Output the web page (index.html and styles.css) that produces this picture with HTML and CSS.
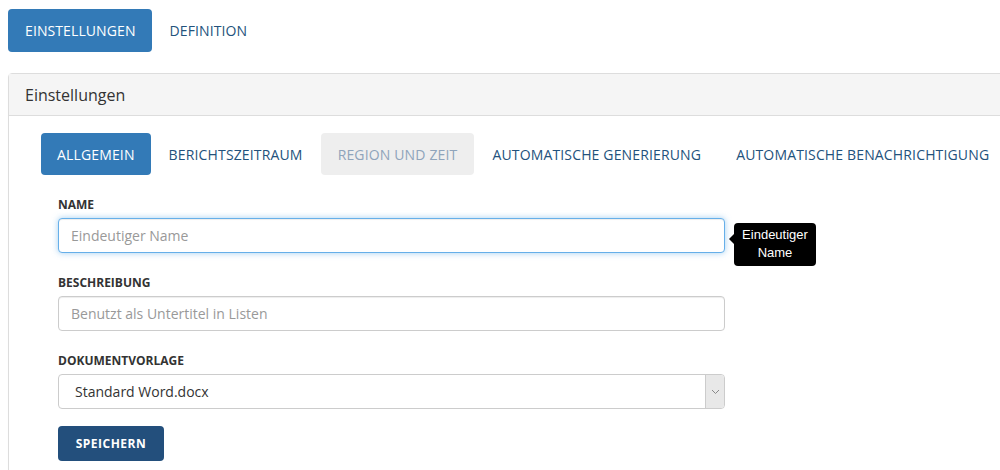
FILE: index.html
```html
<!DOCTYPE html>
<html lang="de">
<head>
<meta charset="utf-8">
<link rel="stylesheet" href="styles.css">
</head>
<body>
<div class="page">
  <nav class="top-tabs">
    <a class="tab active">EINSTELLUNGEN</a>
    <a class="tab">DEFINITION</a>
  </nav>
  <section class="panel">
    <div class="panel-heading">Einstellungen</div>
    <div class="panel-body">
      <nav class="pills">
        <a class="pill active">ALLGEMEIN</a>
        <a class="pill">BERICHTSZEITRAUM</a>
        <a class="pill disabled">REGION UND ZEIT</a>
        <a class="pill">AUTOMATISCHE GENERIERUNG</a>
        <a class="pill">AUTOMATISCHE BENACHRICHTIGUNG</a>
      </nav>
      <form class="form">
        <div class="group">
          <label class="label">NAME</label>
          <div class="field-wrap">
            <input class="input focus" placeholder="Eindeutiger Name">
            <div class="tooltip"><span class="tip-arrow"></span>Eindeutiger<br>Name</div>
          </div>
        </div>
        <div class="group">
          <label class="label">BESCHREIBUNG</label>
          <input class="input" placeholder="Benutzt als Untertitel in Listen">
        </div>
        <div class="group">
          <label class="label">DOKUMENTVORLAGE</label>
          <div class="select">
            <span class="select-value">Standard Word.docx</span>
            <span class="select-arrow">
              <svg width="9" height="6" viewBox="0 0 9 6"><path d="M1 1l3.5 3.5L8 1" fill="none" stroke="#888" stroke-width="1"/></svg>
            </span>
          </div>
        </div>
        <button type="button" class="btn-save">SPEICHERN</button>
      </form>
    </div>
  </section>
</div>
</body>
</html>
```

FILE: styles.css
```css
html, body {
  margin: 0;
  padding: 0;
  background: #fff;
  overflow: hidden;
}
body {
  font-family: "Open Sans", "Segoe UI", sans-serif;
  color: #333;
  font-size: 14px;
}
.page {
  padding: 9px 0 0 8px;
  width: 1040px;
}
.top-tabs {
  display: flex;
  gap: 1px;
}
.tab {
  display: flex;
  align-items: center;
  height: 43px;
  padding: 0 17px;
  font-size: 14px;
  letter-spacing: 0.1px;
  color: #23527c;
  border-radius: 4px;
  box-sizing: border-box;
}
.tab.active {
  background: #337ab7;
  color: #fff;
  padding: 0 16px 0 17px;
}
.panel {
  margin-top: 21px;
  border: 1px solid #ddd;
  border-radius: 4px 0 0 4px;
  box-shadow: 0 1px 1px rgba(0,0,0,.05);
}
.panel-heading {
  background: #f5f5f5;
  border-bottom: 1px solid #ddd;
  height: 41px;
  display: flex;
  align-items: center;
  padding-left: 16px;
  font-size: 16px;
  color: #333;
}
.panel-body {
  padding: 17px 0 12px 32px;
}
.pills {
  display: flex;
  gap: 1px;
}
.pill {
  display: flex;
  align-items: center;
  height: 42px;
  padding: 0 17px;
  font-size: 14px;
  letter-spacing: 0.15px;
  color: #23527c;
  border-radius: 4px;
  white-space: nowrap;
}
.pill.active {
  background: #337ab7;
  color: #fff;
  padding: 0 16px;
}
.pill.disabled {
  background: #eee;
  color: #8fa4bb;
}
.form {
  padding-left: 17px;
  padding-top: 21px;
  width: 667px;
}
.group {
  margin-bottom: 21px;
}
.label {
  display: block;
  font-size: 12px;
  font-weight: 700;
  color: #333;
  line-height: 17px;
  margin-bottom: 5px;
}
.field-wrap {
  position: relative;
}
.input {
  display: block;
  width: 100%;
  height: 35px;
  box-sizing: border-box;
  border: 1px solid #ccc;
  border-radius: 4px;
  padding: 0 12px;
  font-family: "Open Sans", sans-serif;
  font-size: 14px;
  color: #555;
  box-shadow: inset 0 1px 1px rgba(0,0,0,.075);
  outline: none;
}
.input::placeholder {
  color: #999;
}
.input.focus {
  border-color: #66afe9;
  box-shadow: inset 0 1px 1px rgba(0,0,0,.075), 0 0 6px rgba(102,175,233,.6);
}
.tooltip {
  position: absolute;
  left: 676px;
  top: 5px;
  width: 82px;
  height: 43px;
  box-sizing: border-box;
  background: #000;
  color: #fff;
  border-radius: 4px;
  font-family: "Liberation Sans", Arial, sans-serif;
  font-size: 13px;
  line-height: 18px;
  text-align: center;
  padding-top: 3px;
}
.tip-arrow {
  position: absolute;
  left: -5px;
  top: 11px;
  width: 0;
  height: 0;
  border-top: 5px solid transparent;
  border-bottom: 5px solid transparent;
  border-right: 5px solid #000;
}
.select {
  display: flex;
  height: 35px;
  box-sizing: border-box;
  border: 1px solid #ccc;
  border-radius: 4px;
  overflow: hidden;
}
.select-value {
  flex: 1;
  display: flex;
  align-items: center;
  padding-left: 16px;
  font-size: 14px;
  color: #333;
}
.select-arrow {
  width: 18px;
  background: #e8e8e8;
  border-left: 1px solid #ccc;
  display: flex;
  align-items: center;
  justify-content: center;
}
.btn-save {
  margin-top: -4px;
  display: block;
  height: 35px;
  width: 106px;
  border: 0;
  border-radius: 4px;
  background: #234f7c;
  color: #fff;
  font-family: "Open Sans", sans-serif;
  font-size: 12px;
  font-weight: 700;
  letter-spacing: 0.5px;
}
```
